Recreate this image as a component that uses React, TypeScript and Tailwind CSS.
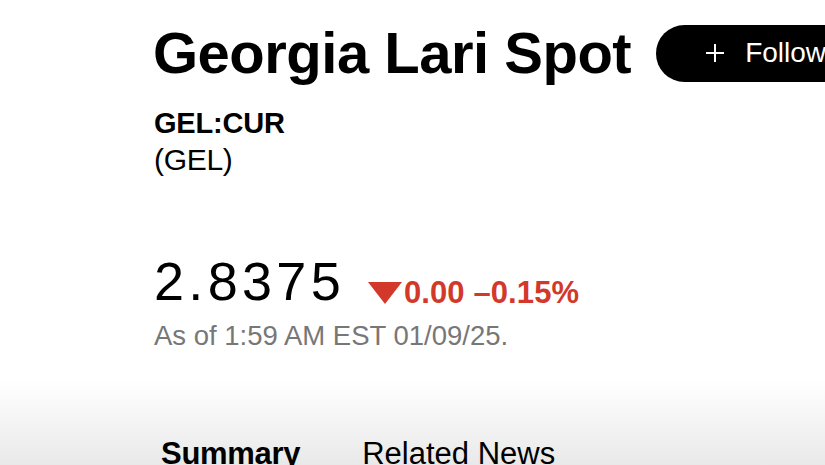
import React from "react";

export default function App() {
  return (
    <div
      className="w-[825px] h-[465px] overflow-hidden bg-[linear-gradient(to_bottom,#ffffff_0px,#ffffff_380px,#e9e9e9_465px)] pl-[153px] text-black"
      style={{ fontFamily: '"Liberation Sans", Arial, Helvetica, sans-serif' }}
    >
      <div className="flex items-center gap-[25px] pt-[24px] whitespace-nowrap">
        <h1 className="text-[58px] leading-[58px] font-bold tracking-[-0.5px] shrink-0">
          Georgia Lari Spot
        </h1>
        <button className="shrink-0 h-[57px] w-[240px] rounded-full bg-black text-white flex items-center pl-[50px] gap-[21px]">
          <svg width="18" height="18" viewBox="0 0 18 18" fill="none" stroke="white" strokeWidth="2">
            <path d="M9 0v18M0 9h18" />
          </svg>
          <span className="text-[28px] leading-none font-normal">Follow</span>
        </button>
      </div>

      <div className="mt-[27px] ml-[1px] text-[29px] leading-[29px] font-bold tracking-[-0.2px]">GEL:CUR</div>
      <div className="mt-[7px] ml-[1px] text-[30px] leading-[30px] tracking-[-0.3px]">(GEL)</div>

      <div className="mt-[79px] flex items-start whitespace-nowrap">
        <div className="ml-[1px] text-[54px] leading-[54px] tracking-[4.3px]">2.8375</div>
        <div className="mt-[23px] ml-[23px] flex items-start text-[#d2392b]">
          <svg width="34" height="22" viewBox="0 0 34 22" className="mt-[5px]">
            <path d="M0 0H34L17 22Z" fill="#d2392b" />
          </svg>
          <span className="ml-[2px] text-[31px] leading-[31px] font-bold tracking-[0.1px]">0.00 –0.15%</span>
        </div>
      </div>

      <div className="mt-[14px] ml-[1px] text-[27.5px] leading-[28px] text-[#777777]">As of 1:59 AM EST 01/09/25.</div>

      <div className="mt-[88px] pl-[8px] flex gap-[62px] text-[31px] leading-[31px] whitespace-nowrap">
        <span className="font-bold tracking-[-0.3px]">Summary</span>
        <span>Related News</span>
      </div>
    </div>
  );
}
